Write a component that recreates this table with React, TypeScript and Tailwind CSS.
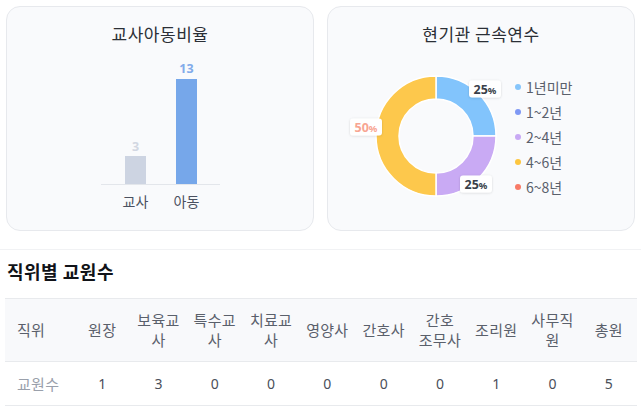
import React from "react";

function arcPath(cx: number, cy: number, r0: number, r1: number, a0: number, a1: number) {
  const p = (r: number, a: number) => {
    const rad = ((a - 90) * Math.PI) / 180;
    return [cx + r * Math.cos(rad), cy + r * Math.sin(rad)];
  };
  const large = a1 - a0 > 180 ? 1 : 0;
  const [x0, y0] = p(r1, a0);
  const [x1, y1] = p(r1, a1);
  const [x2, y2] = p(r0, a1);
  const [x3, y3] = p(r0, a0);
  return `M${x0} ${y0} A${r1} ${r1} 0 ${large} 1 ${x1} ${y1} L${x2} ${y2} A${r0} ${r0} 0 ${large} 0 ${x3} ${y3} Z`;
}

const FONT = { fontFamily: '"Noto Sans CJK KR", "Noto Sans", sans-serif' };
const NUMFONT = { fontFamily: '"Noto Sans", "Noto Sans CJK KR", sans-serif' };

const legend = [
  { label: "1년미만", color: "#86c5fb" },
  { label: "1~2년", color: "#7f98f4" },
  { label: "2~4년", color: "#c8a9f4" },
  { label: "4~6년", color: "#fdc640" },
  { label: "6~8년", color: "#f87a67" },
];

const headers = ["원장", "보육교사", "특수교사", "치료교사", "영양사", "간호사", "간호 조무사", "조리원", "사무직원", "총원"];
const values = [1, 3, 0, 0, 0, 0, 0, 1, 0, 5];

function PctLabel({ x, y, value, color }: { x: number; y: number; value: string; color: string }) {
  return (
    <g>
      <rect x={x - 16} y={y - 8.5} width={32} height={17} rx={3} fill="#ffffff" filter="url(#sh)" />
      <text x={x} y={y + 4.5} textAnchor="middle" fontSize={12.5} fontWeight={700} fill={color} style={NUMFONT}>
        {value}
        <tspan fontSize={9.5}>%</tspan>
      </text>
    </g>
  );
}

export default function App() {
  const cx = 108;
  const cy = 90;
  return (
    <div className="w-[641px] h-[412px] bg-white overflow-hidden" style={FONT}>
      <div className="flex gap-[13px] pl-[6px] pt-[6px]">
        <div className="w-[308px] h-[225px] rounded-[14px] border border-[#e7e9ed] bg-[#f9fafc] flex flex-col items-center">
          <div className="mt-[15px] text-[17px] leading-[24px] tracking-[0.5px] text-[#2b2f36]">교사아동비율</div>
          <svg width={306} height={181} className="block">
            <line x1={94} x2={213} y1={138.5} y2={138.5} stroke="#e3e6eb" strokeWidth={1} />
            <rect x={118} y={110} width={21} height={28} fill="#cdd4e2" />
            <rect x={169} y={33} width={21} height={105} fill="#76a7ea" />
            <text x={128.5} y={105} textAnchor="middle" fontSize={12.5} fontWeight={700} fill="#d2d7e2" style={NUMFONT}>3</text>
            <text x={179.5} y={27} textAnchor="middle" fontSize={12.5} fontWeight={700} fill="#82abea" style={NUMFONT}>13</text>
            <text x={128.5} y={161} textAnchor="middle" fontSize={14} fill="#4b5160" style={FONT}>교사</text>
            <text x={179.5} y={161} textAnchor="middle" fontSize={14} fill="#4b5160" style={FONT}>아동</text>
          </svg>
        </div>
        <div className="w-[308px] h-[225px] rounded-[14px] border border-[#e7e9ed] bg-[#f9fafc] flex flex-col">
          <div className="mt-[15px] text-[17px] leading-[24px] tracking-[0.5px] text-[#2b2f36] text-center">현기관 근속연수</div>
          <div className="flex items-start">
            <svg width={187} height={181} className="block shrink-0">
              <defs>
                <filter id="sh" x="-30%" y="-40%" width="160%" height="180%">
                  <feDropShadow dx="0" dy="0.5" stdDeviation="1" floodColor="#000" floodOpacity="0.15" />
                </filter>
              </defs>
              <path d={arcPath(cx, cy, 37, 60, 0, 90)} fill="#82c4fc" stroke="#ffffff" strokeWidth={1.5} />
              <path d={arcPath(cx, cy, 37, 60, 90, 180)} fill="#c9aaf4" stroke="#ffffff" strokeWidth={1.5} />
              <path d={arcPath(cx, cy, 37, 60, 180, 360)} fill="#fdc84c" stroke="#ffffff" strokeWidth={1.5} />
              <PctLabel x={157} y={43} value="25" color="#3a3f4a" />
              <PctLabel x={38} y={81} value="50" color="#f8a592" />
              <PctLabel x={148} y={138} value="25" color="#3a3f4a" />
            </svg>
            <div className="flex flex-col mt-[28px]">
              {legend.map((l) => (
                <div key={l.label} className="flex items-center h-[25px]">
                  <span className="w-[6px] h-[6px] rounded-full" style={{ backgroundColor: l.color }} />
                  <span className="ml-[5px] text-[14px] leading-[18px] text-[#5a606c]">{l.label}</span>
                </div>
              ))}
            </div>
          </div>
        </div>
      </div>

      <div className="mt-[18px] border-t border-[#f1f2f4]">
        <div className="pt-[9px] px-[7px] text-[18px] leading-[24px] tracking-[0.5px] font-bold text-[#111318]">직위별 교원수</div>
        <table className="mt-[15px] ml-[5px] w-[632px] table-fixed border-collapse">
          <colgroup>
            <col className="w-[69px]" />
          </colgroup>
          <thead>
            <tr className="bg-[#f8f9fb] border-t border-b border-[#e8eaed] h-[63px]">
              <th className="pl-[12px] text-left text-[15px] leading-[20px] tracking-[0.3px] font-normal text-[#5a606b]">직위</th>
              {headers.map((h) => (
                <th
                  key={h}
                  className={
                    h.includes(" ")
                      ? "px-[5px] text-center text-[15px] leading-[20px] tracking-[0.3px] font-normal text-[#5a606b] break-keep"
                      : "px-[5px] text-center text-[15px] leading-[20px] tracking-[0.3px] font-normal text-[#5a606b]"
                  }
                >
                  {h}
                </th>
              ))}
            </tr>
          </thead>
          <tbody>
            <tr className="border-b border-[#e8eaed] h-[44px]">
              <td className="pl-[12px] text-left text-[15px] leading-[20px] tracking-[0.3px] text-[#9aa0ab]">교원수</td>
              {values.map((v, i) => (
                <td key={i} className="text-center text-[14px] leading-[20px] text-[#4a4f5a]" style={NUMFONT}>
                  {v}
                </td>
              ))}
            </tr>
          </tbody>
        </table>
      </div>
    </div>
  );
}
